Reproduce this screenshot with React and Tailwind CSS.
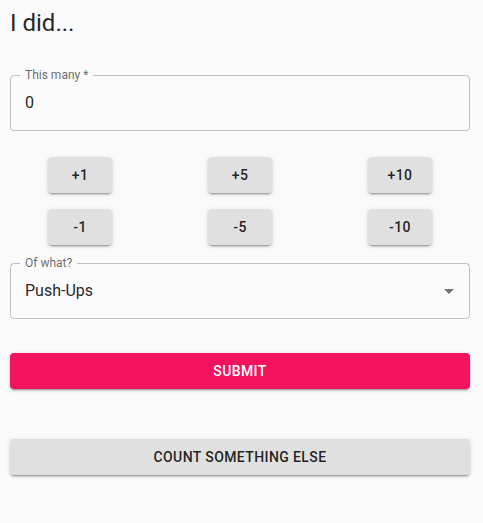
import React from "react";

const btnShadow =
  "shadow-[0px_3px_1px_-2px_rgba(0,0,0,0.2),0px_2px_2px_0px_rgba(0,0,0,0.14),0px_1px_5px_0px_rgba(0,0,0,0.12)]";

function SmallBtn({ label }) {
  return (
    <div className="flex justify-center">
      <button
        className={`w-[64px] h-[36px] rounded-[4px] bg-[#e0e0e0] text-[14px] font-medium tracking-[0.4px] text-[rgba(0,0,0,0.87)] ${btnShadow}`}
      >
        {label}
      </button>
    </div>
  );
}

function Outlined({ label, children }) {
  return (
    <div className="relative h-[56px] rounded-[4px] border border-[rgba(0,0,0,0.23)] flex items-center">
      <span className="absolute left-[9px] top-[-9px] px-[5px] bg-[#fafafa] text-[12px] leading-[16px] text-[rgba(0,0,0,0.6)]">
        {label}
      </span>
      {children}
    </div>
  );
}

export default function App() {
  return (
    <div
      className="min-h-[523px] bg-[#fafafa] w-full"
      style={{ fontFamily: "Roboto, 'Liberation Sans', sans-serif" }}
    >
      <div className="w-[480px] px-[10px]">
        <h1 className="pt-[7px] text-[24px] leading-[32px] font-normal text-[rgba(0,0,0,0.87)]">
          I did...
        </h1>
        <div className="mt-[36px]">
          <Outlined label="This many *">
            <span className="pl-[14px] text-[16px] text-[rgba(0,0,0,0.87)]">0</span>
          </Outlined>
        </div>
        <div className="mx-[-10px] mt-[26px] grid grid-cols-3 gap-y-[16px]">
          <SmallBtn label="+1" />
          <SmallBtn label="+5" />
          <SmallBtn label="+10" />
          <SmallBtn label="-1" />
          <SmallBtn label="-5" />
          <SmallBtn label="-10" />
        </div>
        <div className="mt-[18px]">
          <Outlined label="Of what?">
            <span className="pl-[14px] text-[16px] text-[rgba(0,0,0,0.87)]">Push-Ups</span>
            <svg
              className="absolute right-[8px] top-[15px]"
              width="24"
              height="24"
              viewBox="0 0 24 24"
              fill="rgba(0,0,0,0.54)"
            >
              <path d="M7 10l5 5 5-5z" />
            </svg>
          </Outlined>
        </div>
        <button
          className={`mt-[34px] w-full h-[36px] rounded-[4px] bg-[#f3125d] text-white text-[14px] font-medium tracking-[0.4px] uppercase ${btnShadow}`}
        >
          Submit
        </button>
        <button
          className={`mt-[50px] w-full h-[36px] rounded-[4px] bg-[#e0e0e0] text-[rgba(0,0,0,0.87)] text-[14px] font-medium tracking-[0.4px] uppercase ${btnShadow}`}
        >
          Count something else
        </button>
      </div>
    </div>
  );
}
